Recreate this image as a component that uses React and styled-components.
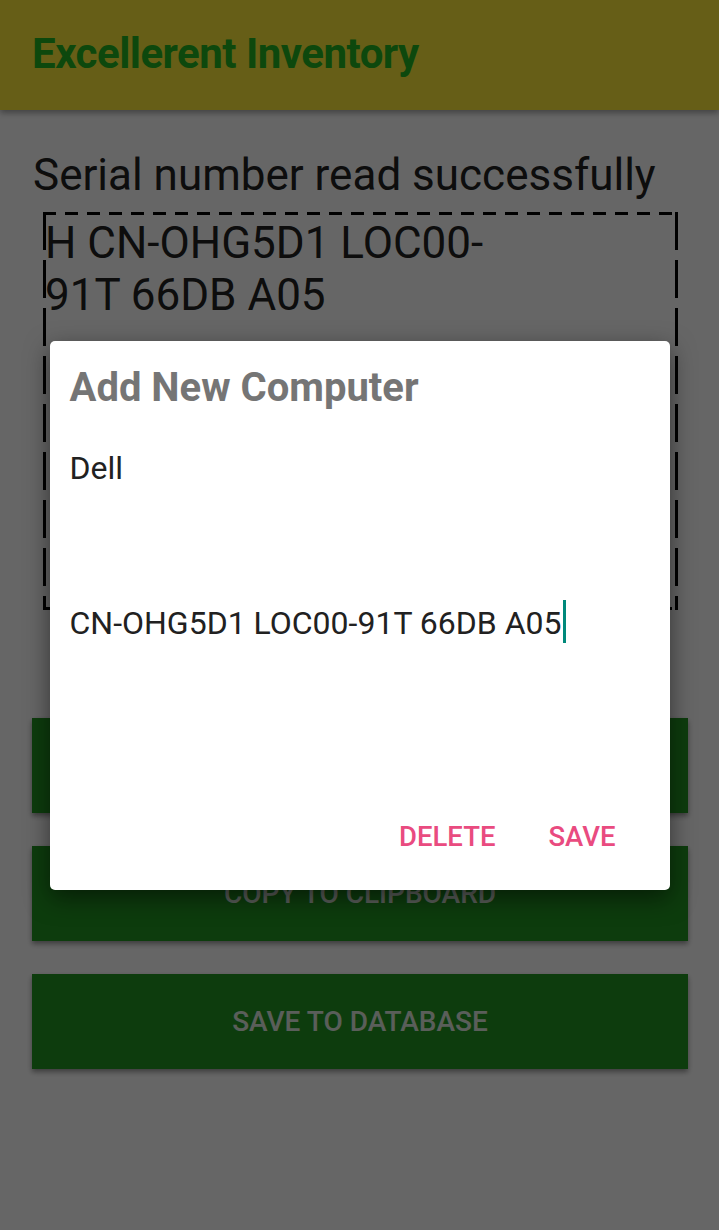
import React from "react";
import styled, { createGlobalStyle } from "styled-components";

const GlobalStyle = createGlobalStyle`
  html, body {
    margin: 0;
    padding: 0;
    background: #ffffff;
    font-family: Roboto, "Noto Sans", "Liberation Sans", sans-serif;
  }
`;

const Page = styled.div`
  position: relative;
  min-height: 100vh;
  background: #ffffff;
  overflow: hidden;
`;

const AppBar = styled.header`
  height: 110px;
  background: #ffeb3b;
  display: flex;
  align-items: center;
  padding: 0 32px;
  box-shadow: 0 3px 6px rgba(0, 0, 0, 0.35);
`;

const Title = styled.h1`
  margin: 0 0 2px;
  font-size: 42px;
  line-height: 50px;
  font-weight: 700;
  color: #22b322;
  letter-spacing: -0.5px;
`;

const Content = styled.main`
  padding: 39px 31px 0 32px;
  display: flex;
  flex-direction: column;
`;

const Status = styled.p`
  margin: 0 0 0 1px;
  font-size: 44px;
  line-height: 52px;
  color: #222;
`;

// dashed frame: short dashes along top/bottom, long ones down the sides
const ReadBox = styled.div`
  margin: 11px 10px 0 11px;
  height: 398px;
  box-sizing: border-box;
  padding: 5px 0 0 2px;
  font-size: 44px;
  line-height: 52px;
  color: #222;
  background:
    repeating-linear-gradient(90deg, #000 0 13px, transparent 13px 22px) top left / 100% 3px no-repeat,
    repeating-linear-gradient(90deg, #000 0 13px, transparent 13px 22px) bottom left / 100% 3px no-repeat,
    repeating-linear-gradient(180deg, #000 0 38px, transparent 38px 48px) top left / 3px 100% no-repeat,
    repeating-linear-gradient(180deg, #000 0 38px, transparent 38px 48px) top right / 3px 100% no-repeat;
`;

const ActionList = styled.div`
  display: flex;
  flex-direction: column;
  gap: 33px;
  margin-top: 108px;
`;

const ActionButton = styled.button`
  height: 95px;
  border: 0;
  background: #219621;
  color: #e0ece0;
  font-family: inherit;
  font-size: 28px;
  font-weight: 500;
  text-transform: uppercase;
  box-shadow: 0 3px 5px rgba(0, 0, 0, 0.4);
`;

const Scrim = styled.div`
  position: absolute;
  inset: 0;
  background: rgba(0, 0, 0, 0.6);
  display: flex;
  align-items: center;
  justify-content: center;
`;

const Dialog = styled.div`
  width: 620px;
  height: 549px;
  background: #fff;
  border-radius: 5px;
  box-shadow: 0 8px 24px rgba(0, 0, 0, 0.5);
  padding: 23px 20px 0 20px;
  box-sizing: border-box;
  display: flex;
  flex-direction: column;
`;

const DialogTitle = styled.h2`
  margin: 0;
  font-size: 40px;
  line-height: 48px;
  font-weight: 700;
  color: #757575;
`;

const Field = styled.div`
  height: ${(p) => p.$h}px;
  margin-top: ${(p) => p.$top || 0}px;
  font-size: 32px;
  line-height: 40px;
  color: #212121;
  display: flex;
  align-items: flex-start;
`;

const Caret = styled.span`
  display: inline-block;
  width: 3px;
  height: 43px;
  margin-top: -3px;
  margin-left: 2px;
  background: #00897b;
`;

const DialogActions = styled.div`
  display: flex;
  justify-content: flex-end;
  gap: 53px;
  padding-right: 34px;
  margin-top: auto;
  margin-bottom: 37px;
`;

const TextButton = styled.button`
  border: 0;
  background: none;
  padding: 0;
  font-family: inherit;
  font-size: 27.5px;
  line-height: 32px;
  font-weight: 500;
  text-transform: uppercase;
  color: #e94b80;
`;

export default function App() {
  return (
    <Page>
      <GlobalStyle />
      <AppBar>
        <Title>Excellerent Inventory</Title>
      </AppBar>
      <Content>
        <Status>Serial number read successfully</Status>
        <ReadBox>
          H CN-OHG5D1 LOC00-
          <br />
          91T 66DB A05
        </ReadBox>
        <ActionList>
          <ActionButton>Read serial number</ActionButton>
          <ActionButton>Copy to clipboard</ActionButton>
          <ActionButton>Save to database</ActionButton>
        </ActionList>
      </Content>
      <Scrim>
        <Dialog>
          <DialogTitle>Add New Computer</DialogTitle>
          <Field $h={155} $top={36}>Dell</Field>
          <Field $h={60}>
            CN-OHG5D1 LOC00-91T 66DB A05
            <Caret />
          </Field>
          <DialogActions>
            <TextButton>Delete</TextButton>
            <TextButton>Save</TextButton>
          </DialogActions>
        </Dialog>
      </Scrim>
    </Page>
  );
}
